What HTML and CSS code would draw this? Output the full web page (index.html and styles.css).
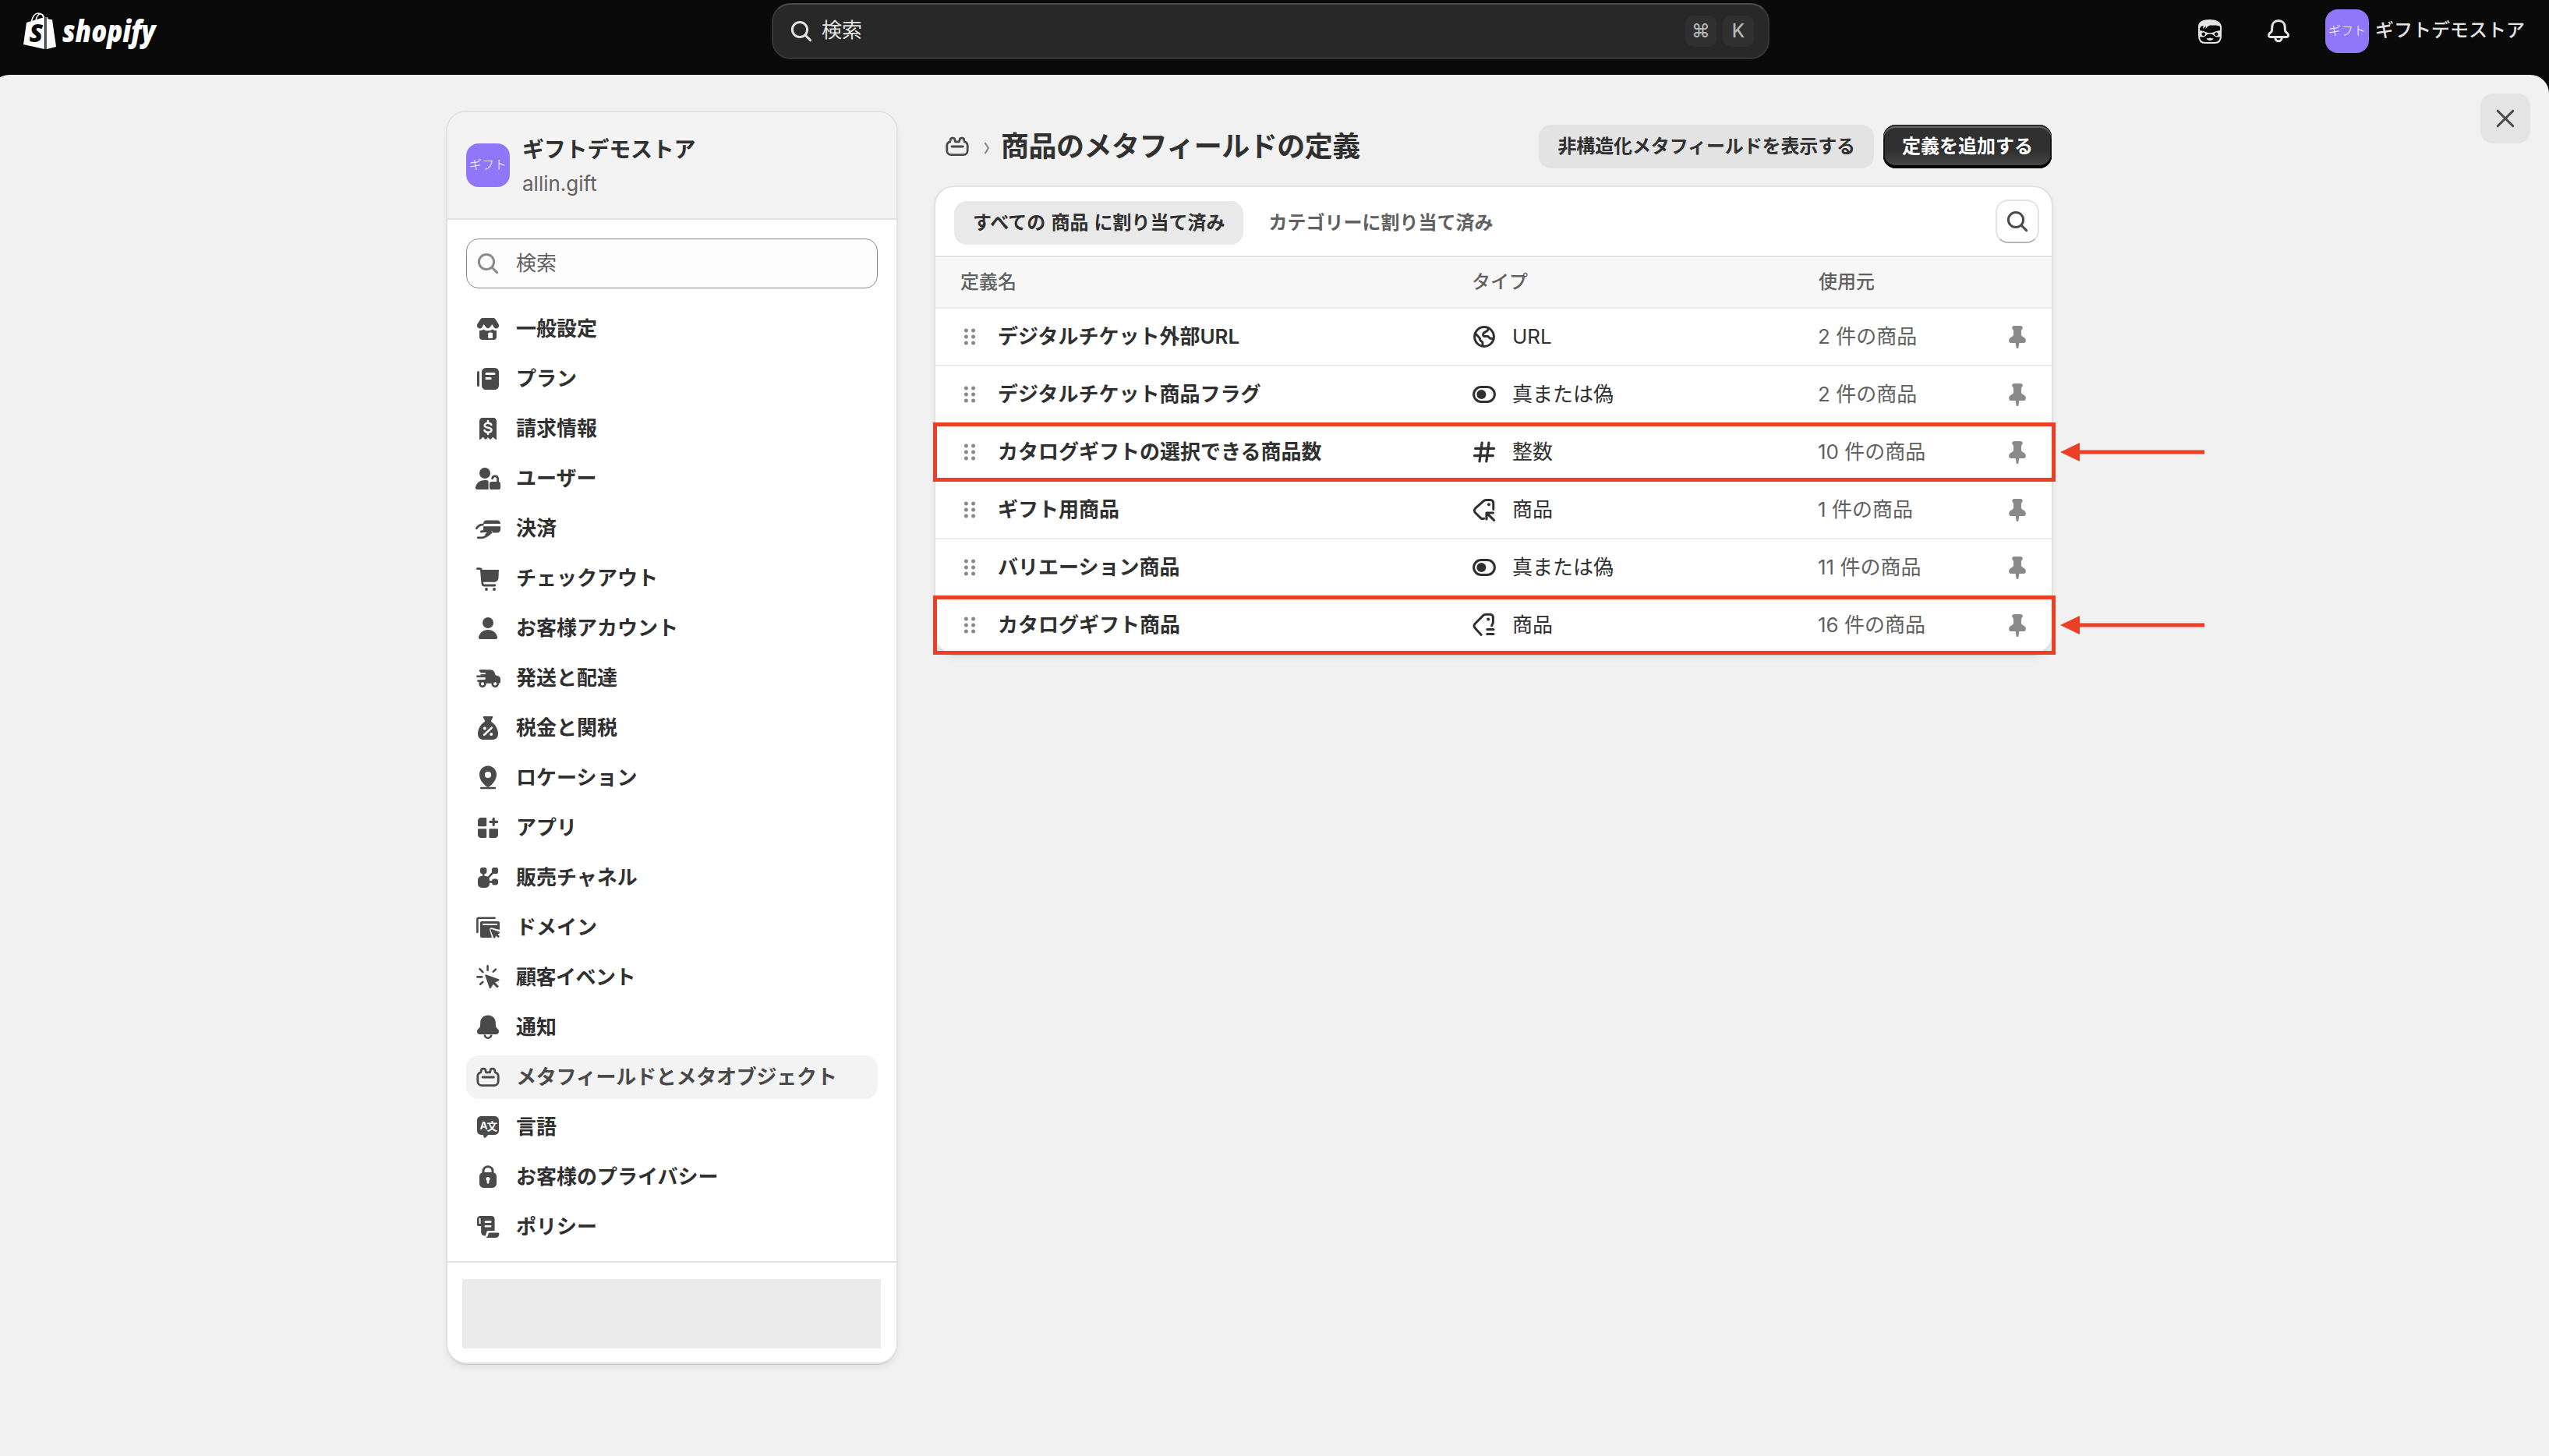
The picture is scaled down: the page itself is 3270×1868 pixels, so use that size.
FILE: index.html
```html
<!DOCTYPE html>
<html lang="ja">
<head>
<meta charset="utf-8">
<title>商品のメタフィールドの定義</title>
<link rel="stylesheet" href="styles.css">
</head>
<body>
<svg class="sprite" aria-hidden="true">
  <symbol id="search" viewBox="0 0 20 20"><circle cx="9" cy="9" r="4.800" fill="none" stroke="currentColor" stroke-width="1.500"/><path d="M12.500 12.500l3.300 3.300" stroke="currentColor" stroke-width="1.500" stroke-linecap="round"/></symbol>
  <symbol id="store" viewBox="0 0 20 20"><path d="M6.600 3h6.800c.6 0 1.100.3 1.400.8l1.900 3c.9 1.400-.1 2.900-1.500 2.900-.7 0-1.200-.4-1.500-1L12.700 7l-1.400 1.900c-.6.9-2 .9-2.600 0L7.300 7 6.300 8.700c-.3.6-.8 1-1.500 1-1.400 0-2.400-1.500-1.500-2.900l1.900-3c.3-.5.8-.8 1.400-.8z"/><path d="M4.500 11c.9.1 1.900-.1 2.600-.8 1.500 1.300 4.300 1.300 5.800 0 .7.700 1.700.9 2.600.8v4.300c0 .9-.7 1.700-1.600 1.700H6.100c-.9 0-1.600-.8-1.600-1.700zM11 12.200c-.5 0-.9.4-.9.900V16H13v-2.900c0-.5-.4-.9-.9-.9z" fill-rule="evenodd"/></symbol>
  <symbol id="plan" viewBox="0 0 20 20"><rect x="3" y="5" width="1.500" height="10" rx=".75"/><rect x="6" y="3" width="11" height="14" rx="2.600"/><path d="M9 6.800h5M9 9.800h2.600" stroke="#fff" stroke-width="1.500" stroke-linecap="round"/></symbol>
  <symbol id="receipt" viewBox="0 0 20 20"><path d="M4.500 5c0-1.100.9-2 2-2h7c1.100 0 2 .9 2 2v11.600c0 .5-.5.600-.8.200L13.200 15.400l-1.400 1.400c-.2.200-.4.200-.6 0L10 15.600l-1.200 1.200c-.2.200-.4.200-.6 0l-1.400-1.400-1.500 1.400c-.3.400-.8.300-.8-.2z"/><path d="M10 5v1.300M10 12.200v1.300M12.200 7.600c-.3-.8-1.100-1.200-2.200-1.200-1.300 0-2.200.6-2.200 1.500 0 2.100 4.500.8 4.500 2.900 0 .9-1 1.500-2.300 1.500-1.100 0-2-.5-2.300-1.300" fill="none" stroke="#fff" stroke-width="1.200" stroke-linecap="round"/></symbol>
  <symbol id="userlock" viewBox="0 0 20 20"><circle cx="8" cy="6.500" r="3.500"/><path d="M2 15.800C2.400 12.900 4.800 11 8 11c.9 0 1.700.1 2.300.4V17H3c-.6 0-1.100-.5-1-1.200z"/><rect x="11" y="12" width="7" height="5" rx="1.300"/><path d="M16.300 12.500V10.200c0-1.100-.8-1.800-1.800-1.800s-1.600.6-1.700 1.500" fill="none" stroke="currentColor" stroke-width="1.400" stroke-linecap="round"/></symbol>
  <symbol id="payment" viewBox="0 0 20 20"><path d="M7 6.700c0-1.100.9-2 2-2h7c1.100 0 2 .9 2 2V7H7zM7 8.600h11v2.100c0 1.100-.9 2-2 2h-3.200c.3-.9-.4-1.500-1.200-1.400L7 12z"/><path d="M2.700 9.900c1-1.600 2.200-2.300 4-2.300M5.700 12l6.100-.7-3 2.700M3.600 15.900h2.600c2.200 0 3.800-1.500 5.800-3.300" fill="none" stroke="currentColor" stroke-width="1.400" stroke-linecap="round"/></symbol>
  <symbol id="cart" viewBox="0 0 20 20"><path d="M5.500 4.500H17l-.3 5.400c-.1 1.400-1.300 2.500-2.700 2.500H6z"/><path d="M3.200 3.800h1.500c.6 0 .9.300 1 .9l.8 8.800c.1.700.5 1 1.100 1h6.800" fill="none" stroke="currentColor" stroke-width="1.400" stroke-linecap="round"/><circle cx="9" cy="17" r="1"/><circle cx="14" cy="17" r="1"/></symbol>
  <symbol id="person" viewBox="0 0 20 20"><circle cx="10" cy="6.500" r="3.500"/><path d="M4 15.700C4.500 13 6.900 11 10 11s5.500 2 6 4.700c.1.700-.4 1.300-1 1.300H5c-.6 0-1.100-.6-1-1.300z"/></symbol>
  <symbol id="truck" viewBox="0 0 20 20"><path d="M4.900 5.700c0-.6.400-1.100 1-1.100h5.800c1.200 0 2.100.7 2.500 1.800l.6 1.700 2 .7c.7.300 1.200 1 1.200 1.700v1.900c0 .6-.4 1-1 1H5V11h3.200V8.400H5.300V6.800z"/><path d="M3.200 8.900h5.300M3.700 11.800h3.300M5 5.300h3" stroke="currentColor" stroke-width="1.300" stroke-linecap="round"/><path d="M4 9.900h4.200M4.600 7.100h3.800" stroke="#fff" stroke-width=".9"/><circle cx="6.500" cy="13.700" r="1.700" fill="#fff" stroke="currentColor" stroke-width="1.300"/><circle cx="14.600" cy="13.700" r="1.700" fill="#fff" stroke="currentColor" stroke-width="1.300"/></symbol>
  <symbol id="tax" viewBox="0 0 20 20"><path d="M7.300 2.500h5.400c.4 0 .6.400.4.800L12 5.300v.6c2.300 1.300 4.500 4.600 4.500 7.600s-1.700 4-3.700 4H7.200c-2 0-3.700-1-3.700-4S5.700 7.200 8 5.900v-.6l-1.100-2c-.2-.4 0-.8.400-.8z"/><path d="M7.600 14.400l4.800-4.600" stroke="#fff" stroke-width="1.300" stroke-linecap="round"/><circle cx="7.900" cy="10.200" r="1" fill="#fff"/><circle cx="12.100" cy="14" r="1" fill="#fff"/></symbol>
  <symbol id="pinmap" viewBox="0 0 20 20"><path fill-rule="evenodd" d="M10 2.200c3.200 0 5.500 2.500 5.500 5.500 0 3.700-2.500 6-4.500 7.800-.6.500-1.400.5-2 0-2-1.800-4.500-4.100-4.500-7.800 0-3 2.300-5.500 5.500-5.500zM10 6a2 2 0 100 4.100A2 2 0 0010 6z"/><path d="M5.600 16.500h8.800" stroke="currentColor" stroke-width="1.300" stroke-linecap="round"/></symbol>
  <symbol id="apps" viewBox="0 0 20 20"><path d="M3.500 5.500c0-1.100.9-2 2-2h3c.3 0 .6.300.6.600v4.400c0 .3-.3.600-.6.600H4.100c-.3 0-.6-.3-.6-.6zM3.500 11.200c0-.3.300-.6.600-.6h4.400c.3 0 .6.300.6.600v4.700c0 .3-.3.600-.6.600h-3c-1.100 0-2-.9-2-2zM10.700 11.200c0-.3.300-.6.600-.6h4.600c.3 0 .6.300.6.600v3.300c0 1.100-.9 2-2 2h-3.200c-.3 0-.6-.3-.6-.6z"/><path d="M13.600 4.200v4M11.500 6.200h4.300" stroke="currentColor" stroke-width="1.600" stroke-linecap="round"/></symbol>
  <symbol id="channels" viewBox="0 0 20 20"><rect x="3.500" y="9" width="7.500" height="7.500" rx="2.500"/><rect x="5" y="3.500" width="4.200" height="4" rx="1.400"/><rect x="12.500" y="3.500" width="4" height="4" rx="1.400"/><rect x="12.500" y="10.700" width="4" height="4" rx="1.400"/><path d="M7.100 7v3M13.500 6.500L9.800 10.300M10.500 12.700H13" stroke="currentColor" stroke-width="1.300"/></symbol>
  <symbol id="domain" viewBox="0 0 20 20"><path d="M3.200 13V4.800c0-.6.300-.9.900-.9h10.200" fill="none" stroke="currentColor" stroke-width="1.300" stroke-linecap="round"/><path fill-rule="evenodd" d="M5 7c0-.6.500-1 1-1h10.500c.6 0 1 .4 1 1v4.500l-4.900-1.300c-1-.3-1.700.6-1.400 1.500l1.300 4.800H6c-.5 0-1-.4-1-1zm1.500.5v1H16v-1z"/><path d="M11.700 11.600c-.1-.4.200-.7.600-.6l4.900 1.700c.5.200.5.900 0 1.100l-1 .4 1.300 1.400-.9 1-1.400-1.400-.6 1.300c-.2.500-.9.400-1.100-.1z"/></symbol>
  <symbol id="burst" viewBox="0 0 20 20"><path d="M9.800 2.700v2.700M4.700 4.600l2 2M15 4.800l-1.600 1.500M3.200 9.700h2.900M6.700 12.900l-1.600 1.500" stroke="currentColor" stroke-width="1.300" stroke-linecap="round"/><path d="M8.200 8.900c-.1-.5.300-.8.700-.7l8 2.900c.5.200.5.800.1 1l-2.400 1.200 2.400 2.400-1.100 1.100-2.500-2.400-1.500 2.400c-.3.400-.8.400-1-.1z"/></symbol>
  <symbol id="bellf" viewBox="0 0 20 20"><path d="M10 2.300c2.800 0 4.800 2 4.900 4.600l.1 2.200c0 .5.200.9.500 1.200l.9.900c1.300 1.400.4 3.300-1.400 3.300H5c-1.800 0-2.700-1.900-1.400-3.300l.9-.9c.3-.3.500-.7.500-1.200l.1-2.200C5.200 4.300 7.200 2.300 10 2.300z"/><path d="M7.900 14.700c0 2.900 4.200 2.900 4.200 0" fill="none" stroke="currentColor" stroke-width="1.300"/></symbol>
  <symbol id="bello" viewBox="0 0 20 20"><path d="M10 3.300c2.400 0 4 1.600 4.100 3.900l.1 1.800c0 .7.200 1.300.7 1.700l1 .9c.9.900.3 2.200-.9 2.200H5c-1.200 0-1.800-1.300-.9-2.200l1-.9c.5-.4.700-1 .7-1.700l.1-1.800C6 4.900 7.600 3.300 10 3.300zM7.900 14c0 3.200 4.200 3.200 4.200 0" fill="none" stroke="currentColor" stroke-width="1.500"/></symbol>
  <symbol id="meta" viewBox="0 0 20 20"><path d="M5.400 6.900l.3-1.400c.1-.5.500-.9 1-.9h.7c.5 0 .9.300 1 .8l.3 1.500h2.600l.3-1.500c.1-.5.500-.8 1-.8h.7c.5 0 .9.400 1 .9l.3 1.400c1.200.3 2 1.200 2 2.500v3.200c0 1.500-1.200 2.700-2.700 2.700H6.100c-1.500 0-2.700-1.200-2.700-2.700V9.400c0-1.300.8-2.200 2-2.500zM6.500 10h7.200" fill="none" stroke="currentColor" stroke-width="1.400" stroke-linecap="round" stroke-linejoin="round"/></symbol>
  <symbol id="lock" viewBox="0 0 20 20"><path d="M7 8V6.300c0-1.700 1.300-2.900 3-2.900s3 1.200 3 2.900V8" fill="none" stroke="currentColor" stroke-width="1.500"/><path fill-rule="evenodd" d="M4.500 9.700c0-1.500 1.200-2.700 2.700-2.700h5.600c1.500 0 2.700 1.200 2.700 2.700v4.600c0 1.500-1.200 2.700-2.700 2.700H7.200c-1.500 0-2.700-1.200-2.700-2.700zM10 10a1.300 1.300 0 00-.7 2.400v1.100c0 1 1.400 1 1.400 0v-1.100A1.300 1.300 0 0010 10z"/></symbol>
  <symbol id="policy" viewBox="0 0 20 20"><path fill-rule="evenodd" d="M3 5c0-1.100.9-2 2-2h7.300c1.100 0 2 .9 2 2v7.500H10.500c-.8 0-1.300.4-1.500 1.100l-.5 2.100C6.800 16 5.600 15 5.600 13.400V9.500H3.700c-.4 0-.7-.3-.7-.7zm1.300-.1V8h1V5c0-.8-1-.8-1-.1z"/><path d="M8.400 6.800h3.200M8.400 9.600h3.200" stroke="#fff" stroke-width="1.300" stroke-linecap="round"/><path d="M10.200 14.700c.1-.6.400-.9 1-.9H16.500c.5 0 .8.400.7.900-.2 1.500-1 2.300-2.500 2.300H8.400c.9-.3 1.500-1.100 1.800-2.300z"/></symbol>
  <symbol id="globe" viewBox="0 0 20 20"><path d="M10 3.800a6.200 6.200 0 100 12.400 6.200 6.200 0 000-12.400zM4.200 7.700l2.700 2.900c.4.500.3 1 .5 1.500.2.700 1.200.8 1.500 1.500l.2 2.400M12.800 4.500l-.7 1.600-2 1.200c-.9.600-1.200 2-.1 2.400h2.200c.8.200 1 1 1.500 1.300l2.100.4" fill="none" stroke="currentColor" stroke-width="1.500" stroke-linejoin="round"/></symbol>
  <symbol id="toggle" viewBox="0 0 20 20"><rect x="3.300" y="5.300" width="13.400" height="9.400" rx="4.700" fill="none" stroke="currentColor" stroke-width="1.500"/><circle cx="8.200" cy="10" r="3"/></symbol>
  <symbol id="number" viewBox="0 0 20 20"><path d="M8.600 4L7 16M13 4l-1.600 12M4.300 7.700h12M3.700 12.300h12" fill="none" stroke="currentColor" stroke-width="1.600" stroke-linecap="round"/></symbol>
  <symbol id="product" viewBox="0 0 20 20"><path d="M15.900 9.800V5.600c0-1.100-.8-1.900-1.900-1.900h-2.800c-.6 0-1.100.2-1.500.6L4.300 9.100c-.8.800-.8 2 0 2.800l3.300 3.300c.7.700 1.500.8 2.300.4" fill="none" stroke="currentColor" stroke-width="1.500" stroke-linecap="round"/><circle cx="13" cy="6.600" r="1"/><path d="M11.500 16v-4h4.200M12.200 12.700l4.100 4" fill="none" stroke="currentColor" stroke-width="1.600" stroke-linecap="round" stroke-linejoin="round"/></symbol>
  <symbol id="productlist" viewBox="0 0 20 20"><path d="M15.700 8.500V5c0-1.100-.8-1.900-1.900-1.900H11c-.6 0-1.100.2-1.500.6L4.100 9.100c-.8.800-.8 2 0 2.800l4 4.300M15.700 8.500l-.9 1.900" fill="none" stroke="currentColor" stroke-width="1.500" stroke-linecap="round"/><circle cx="12.600" cy="6.200" r="1"/><path d="M11.900 12.700h4.100M11.900 15.800h4.100" stroke="currentColor" stroke-width="1.500" stroke-linecap="round"/></symbol>
  <symbol id="pin" viewBox="0 0 20 20"><path d="M8 3h4c.8 0 1.400.5 1.400 1.200 0 .5-.3.900-.6 1.200-.2.300-.3.600-.3 1v2.300c0 .4.200.7.500.9l1.300.9c.7.400 1.100 1 1.100 1.800v.3c0 .8-.5 1.400-1.200 1.400H11.200l-.5 3c-.1.700-1.300.7-1.400 0l-.5-3H5.800c-.7 0-1.200-.6-1.200-1.400v-.3c0-.8.400-1.400 1.100-1.800l1.300-.9c.3-.2.500-.5.500-.9V6.400c0-.4-.1-.7-.3-1-.3-.3-.6-.7-.6-1.200C6.600 3.500 7.200 3 8 3z"/></symbol>
  <symbol id="drag" viewBox="0 0 20 20"><circle cx="7.700" cy="6" r="1.250"/><circle cx="12.300" cy="6" r="1.250"/><circle cx="7.700" cy="10" r="1.250"/><circle cx="12.300" cy="10" r="1.250"/><circle cx="7.700" cy="14" r="1.250"/><circle cx="12.300" cy="14" r="1.250"/></symbol>
  <symbol id="close" viewBox="0 0 20 20"><path d="M5.100 5.100l9.800 9.800M14.900 5.100l-9.800 9.800" stroke="currentColor" stroke-width="1.500" stroke-linecap="round"/></symbol>
  <symbol id="face" viewBox="0 0 30 31"><path d="M1 8v13c0 6 3 9 8 9h12c5 0 8-3 8-9V8" fill="none" stroke="currentColor" stroke-width="2"/><path d="M0 9C0 3 6 0 14.500 0S30 3 30 10c-3-2-6-2.500-10-2.500h-5L12.500 9l1-1.500L9.500 12l.5-3.500L6 12l.5-4C4 8 2 10 1.500 13H0z"/><path fill-rule="evenodd" d="M0 14c5 0 7 1 10 2.200 3 1.200 7 1.200 10 0C23 15 25 14 30 14v7c-3 2.500-9 2-11-1.500-1.500-1.500-6.500-1.500-8 0C9 23 3 23.500 0 21zm6.700 2.500a2.300 2.300 0 100 4.600 2.300 2.300 0 000-4.600zm16.500 0a2.300 2.300 0 100 4.600 2.300 2.300 0 000-4.600z"/><path d="M10.500 24c2 1 3.500-.6 4.700-.6s2.600 1.600 4.500.6c-.8 4-8.400 4-9.200 0z"/></symbol>
</svg>

<header class="topbar">
  <div class="logo">
    <svg class="logo-bag" viewBox="0 0 42 47"><path d="M4 13l23-7v41L0 41zM30 6l2 2.500 5 .7L42 44l-12 3z"/><path d="M28 6h3v41h-3z"/><path d="M10.500 11C12 5 15 1 19 1s6 2 7 6M16 10c1-5 3.500-8 6-8s4 2 4.500 5" fill="none" stroke="currentColor" stroke-width="1.600"/><path d="M29 6v41" stroke="#0a0a0a" stroke-width="1.300"/><text class="bag-letter" x="7.500" y="38">S</text></svg>
    <svg class="logo-word" viewBox="0 0 124 50"><text x="1" y="38" textLength="119.500" lengthAdjust="spacingAndGlyphs">shopify</text></svg>
  </div>
  <div class="global-search">
    <svg class="icon"><use href="#search"/></svg>
    <span class="global-search-text">検索</span>
    <kbd>⌘</kbd><kbd>K</kbd>
  </div>
  <div class="top-actions">
    <svg class="face"><use href="#face"/></svg>
    <svg class="icon bell"><use href="#bello"/></svg>
    <div class="account"><span class="avatar">ギフト</span><span class="account-name">ギフトデモストア</span></div>
  </div>
</header>

<main class="panel">
  <aside class="sidebar">
    <div class="store">
      <span class="avatar">ギフト</span>
      <div class="store-text"><div class="store-name">ギフトデモストア</div><div class="store-domain">allin.gift</div></div>
    </div>
    <div class="side-search"><svg class="icon"><use href="#search"/></svg><span>検索</span></div>
    <nav class="nav">
      <a class="nav-item"><svg class="icon"><use href="#store"/></svg>一般設定</a>
      <a class="nav-item"><svg class="icon"><use href="#plan"/></svg>プラン</a>
      <a class="nav-item"><svg class="icon"><use href="#receipt"/></svg>請求情報</a>
      <a class="nav-item"><svg class="icon"><use href="#userlock"/></svg>ユーザー</a>
      <a class="nav-item"><svg class="icon"><use href="#payment"/></svg>決済</a>
      <a class="nav-item"><svg class="icon"><use href="#cart"/></svg>チェックアウト</a>
      <a class="nav-item"><svg class="icon"><use href="#person"/></svg>お客様アカウント</a>
      <a class="nav-item"><svg class="icon"><use href="#truck"/></svg>発送と配達</a>
      <a class="nav-item"><svg class="icon"><use href="#tax"/></svg>税金と関税</a>
      <a class="nav-item"><svg class="icon"><use href="#pinmap"/></svg>ロケーション</a>
      <a class="nav-item"><svg class="icon"><use href="#apps"/></svg>アプリ</a>
      <a class="nav-item"><svg class="icon"><use href="#channels"/></svg>販売チャネル</a>
      <a class="nav-item"><svg class="icon"><use href="#domain"/></svg>ドメイン</a>
      <a class="nav-item tight"><svg class="icon"><use href="#burst"/></svg>顧客イベント</a>
      <a class="nav-item"><svg class="icon"><use href="#bellf"/></svg>通知</a>
      <a class="nav-item selected"><svg class="icon"><use href="#meta"/></svg>メタフィールドとメタオブジェクト</a>
      <a class="nav-item"><svg class="icon" viewBox="0 0 20 20"><path d="M3 5.600C3 4.200 4.200 3 5.600 3h8.800C15.800 3 17 4.200 17 5.600v6.800c0 1.400-1.200 2.600-2.600 2.600H10.100l-1.500 1.600c-.5.500-1.300.3-1.400-.4L7 15H5.600C4.200 15 3 13.800 3 12.400z"/><text class="icon-text" x="4.800" y="11.500">A</text><text class="icon-text" x="9.300" y="11.800">文</text></svg>言語</a>
      <a class="nav-item"><svg class="icon"><use href="#lock"/></svg>お客様のプライバシー</a>
      <a class="nav-item"><svg class="icon"><use href="#policy"/></svg>ポリシー</a>
    </nav>
    <div class="side-footer"><div class="footer-block"></div></div>
  </aside>

  <section class="content">
    <div class="page-head">
      <svg class="icon crumb"><use href="#meta"/></svg>
      <svg class="chevron" viewBox="0 0 8 16"><path d="M1.500 1l4.500 7-4.500 7" fill="none" stroke="currentColor" stroke-width="2.200" stroke-linejoin="round"/></svg>
      <h1>商品のメタフィールドの定義</h1>
      <button class="btn secondary">非構造化メタフィールドを表示する</button>
      <button class="btn primary">定義を追加する</button>
    </div>
    <div class="card">
      <div class="tabs">
        <button class="tab active">すべての 商品 に割り当て済み</button>
        <button class="tab">カテゴリーに割り当て済み</button>
        <button class="search-btn"><svg class="icon"><use href="#search"/></svg></button>
      </div>
      <div class="thead"><span>定義名</span><span>タイプ</span><span>使用元</span></div>
      <div class="row"><svg class="icon drag"><use href="#drag"/></svg><span class="name">デジタルチケット外部URL</span><svg class="icon"><use href="#globe"/></svg><span class="type">URL</span><span class="used">2 件の商品</span><svg class="icon pin"><use href="#pin"/></svg></div>
      <div class="row"><svg class="icon drag"><use href="#drag"/></svg><span class="name">デジタルチケット商品フラグ</span><svg class="icon"><use href="#toggle"/></svg><span class="type">真または偽</span><span class="used">2 件の商品</span><svg class="icon pin"><use href="#pin"/></svg></div>
      <div class="row marked"><svg class="icon drag"><use href="#drag"/></svg><span class="name">カタログギフトの選択できる商品数</span><svg class="icon"><use href="#number"/></svg><span class="type">整数</span><span class="used">10 件の商品</span><svg class="icon pin"><use href="#pin"/></svg><svg class="arrow" viewBox="0 0 185 24"><path d="M0 12L25 0v9.500h160v5H25V24z"/></svg></div>
      <div class="row"><svg class="icon drag"><use href="#drag"/></svg><span class="name">ギフト用商品</span><svg class="icon"><use href="#product"/></svg><span class="type">商品</span><span class="used">1 件の商品</span><svg class="icon pin"><use href="#pin"/></svg></div>
      <div class="row"><svg class="icon drag"><use href="#drag"/></svg><span class="name">バリエーション商品</span><svg class="icon"><use href="#toggle"/></svg><span class="type">真または偽</span><span class="used">11 件の商品</span><svg class="icon pin"><use href="#pin"/></svg></div>
      <div class="row marked"><svg class="icon drag"><use href="#drag"/></svg><span class="name">カタログギフト商品</span><svg class="icon"><use href="#productlist"/></svg><span class="type">商品</span><span class="used">16 件の商品</span><svg class="icon pin"><use href="#pin"/></svg><svg class="arrow" viewBox="0 0 185 24"><path d="M0 12L25 0v9.500h160v5H25V24z"/></svg></div>
    </div>
  </section>

  <button class="close"><svg class="icon"><use href="#close"/></svg></button>
</main>
</body>
</html>
```

FILE: styles.css
```css
*, *::after { box-sizing: border-box; }
body {
  margin: 0;
  height: 1868px;
  overflow: hidden;
  display: flex;
  flex-direction: column;
  background: #0a0a0a;
  color: #303030;
  font: 400 26px/40px Inter, "Noto Sans CJK JP", sans-serif;
}
button { font: inherit; color: inherit; border: 0; padding: 0; white-space: nowrap; }
svg { display: block; flex: none; fill: currentColor; }
.sprite { position: absolute; width: 0; height: 0; }
.icon { width: 40px; height: 40px; }
.icon-text { fill: #fff; font: 700 6.8px Inter, "Noto Sans CJK JP", sans-serif; }

/* top bar */
.topbar {
  height: 96px;
  flex: none;
  display: grid;
  grid-template-columns: 990px 1280px 1fr;
  align-items: start;
  color: #e3e3e3;
}
.logo { display: flex; padding: 16px 0 0 30px; gap: 7px; color: #fff; }
.logo-bag { width: 42px; height: 47px; }
.logo-word { width: 124px; height: 50px; }
.logo-word text { font: italic 800 38px "Open Sans", "Noto Sans", sans-serif; }
.bag-letter { fill: #0a0a0a; font: italic 800 32px "Open Sans", "Noto Sans", sans-serif; }
.global-search {
  height: 72px;
  margin-top: 4px;
  padding: 0 18px 0 16px;
  display: flex;
  align-items: center;
  border: 2px solid #363636;
  border-top-color: #4a4a4a;
  border-radius: 24px;
  background: #282828;
}
.global-search .icon { margin-right: 6px; }
.global-search-text { flex: 1; margin-top: -2px; }
kbd {
  width: 40px;
  height: 40px;
  margin-left: 8px;
  border-radius: 10px;
  background: #303030;
  color: #b5b5b5;
  text-align: center;
  font: 500 24px/40px Inter, "DejaVu Sans", sans-serif;
}
.top-actions { display: flex; justify-content: flex-end; align-items: center; padding: 12px 31px 0 0; height: 68px; }
.face { width: 30px; height: 31px; margin-right: 53px; }
.bell { margin-right: 40px; }
.account { display: flex; align-items: center; gap: 8px; }
.account-name { font-size: 24px; font-weight: 500; margin-top: -2px; }
.avatar {
  width: 56px;
  height: 56px;
  flex: none;
  border-radius: 16px;
  background: #9077fa;
  color: #fff;
  font-size: 16px;
  font-weight: 300;
  line-height: 54px;
  text-align: center;
}

/* settings panel */
.panel {
  flex: 1;
  margin-left: -12px;
  padding: 24px 24px 0 586px;
  display: flex;
  align-items: flex-start;
  border-radius: 24px 24px 0 0;
  background: #f1f1f1;
}
.sidebar, .card {
  background: #fff;
  border-radius: 24px;
  box-shadow: 0 0 0 2px #e1e1e1, 0 3px 1px #c8c8c8, 0 6px 10px rgba(0, 0, 0, .07);
}
.sidebar { width: 576px; height: 1604px; margin-top: 24px; flex: none; }
.store {
  height: 138px;
  padding: 0 24px;
  display: flex;
  align-items: center;
  gap: 16px;
  border-bottom: 2px solid #e1e1e1;
  border-radius: 24px 24px 0 0;
  background: #f3f3f3;
}
.store-text { padding-top: 4px; }
.store-name { font-size: 28px; font-weight: 600; line-height: 44px; letter-spacing: -.2px; }
.store-domain { color: #616161; line-height: 44px; }
.side-search {
  height: 64px;
  margin: 24px 24px 0;
  padding-left: 7px;
  display: flex;
  align-items: center;
  gap: 16px;
  border: 1px solid #8a8a8a;
  border-radius: 16px;
  background: #fdfdfd;
  color: #616161;
}
.side-search .icon { color: #8a8a8a; }
.nav { display: flex; flex-direction: column; gap: 8px; padding: 24px 24px 16px; }
.nav-item {
  height: 56px;
  padding-left: 8px;
  display: flex;
  align-items: center;
  gap: 16px;
  border-radius: 16px;
  font-weight: 600;
}
.nav-item .icon { color: #4a4a4a; }
.nav-item.tight { letter-spacing: -.5px; }
.nav-item.selected { background: #f3f3f3; color: #4a4a4a; letter-spacing: -.25px; }
.side-footer { border-top: 2px solid #e3e3e3; padding: 21px 20px 0 19px; }
.footer-block { height: 89px; background: #ebebeb; }

/* main column */
.content { width: 1432px; margin: 40px 0 0 50px; flex: none; }
.page-head { height: 56px; display: flex; align-items: center; }
.crumb { margin-left: 8px; color: #4a4a4a; }
.chevron { width: 8px; height: 16px; margin: 4px 14px 0 14px; color: #8a8a8a; }
h1 { flex: 1; margin: 0; font-size: 36px; line-height: 48px; font-weight: 600; letter-spacing: -.5px; }
.btn {
  height: 56px;
  padding: 0 24px 1px;
  margin-left: 12px;
  border-radius: 16px;
  background: #e3e3e3;
  font-size: 24px;
  font-weight: 600;
}
.btn.secondary { letter-spacing: -.12px; }
.btn.primary {
  background: linear-gradient(#303030 60%, #4a4a4a);
  color: #fff;
  box-shadow: inset 0 2px 0 #303030, inset 0 4px 0 #666, inset 0 -4px 0 #000, inset 0 0 0 2px #1a1a1a;
}
.card { margin-top: 24px; height: 598px; }
.tabs { height: 90px; display: flex; align-items: center; padding: 0 16px 0 24px; gap: 8px; border-bottom: 2px solid #e3e3e3; }
.tab {
  height: 56px;
  margin-top: 3px;
  padding: 0 24px;
  border-radius: 16px;
  background: none;
  color: #616161;
  font-size: 24px;
  font-weight: 600;
  word-spacing: 1px;
}
.tab.active { background: #e9e9e9; color: #303030; }
.search-btn {
  width: 56px;
  height: 56px;
  margin-left: auto;
  margin-top: -1px;
  display: grid;
  place-items: center;
  border: 2px solid #e3e3e3;
  border-bottom-color: #b5b5b5;
  border-radius: 16px;
  background: #fff;
  color: #4a4a4a;
}
.thead {
  height: 66px;
  padding: 0 32px;
  display: grid;
  grid-template-columns: 656px 445px 1fr;
  align-items: center;
  border-bottom: 2px solid #ebebeb;
  background: #f7f7f7;
  color: #616161;
  font-size: 24px;
  font-weight: 500;
}
.row {
  position: relative;
  height: 74px;
  padding: 0 24px;
  display: grid;
  grid-template-columns: 56px 604px 56px 392px 236px 40px;
  align-items: center;
  border-bottom: 2px solid #ebebeb;
}
.row:last-child { height: 72px; border-bottom: 0; }
.row > span { margin-top: -1px; }
.row .name { font-weight: 600; }
.row .used { color: #616161; }
.row .drag, .row .pin { color: #8a8a8a; }

/* annotations over the table */
.marked::after {
  content: "";
  position: absolute;
  left: -3px;
  top: -2px;
  width: 1440px;
  height: 76px;
  border: 5px solid #eb4025;
}
.arrow { position: absolute; left: 1443px; top: 24px; width: 185px; height: 24px; color: #eb4025; }

.close {
  width: 64px;
  height: 64px;
  margin-left: auto;
  display: grid;
  place-items: center;
  border-radius: 16px;
  background: #e4e4e4;
  color: #4a4a4a;
}
```
